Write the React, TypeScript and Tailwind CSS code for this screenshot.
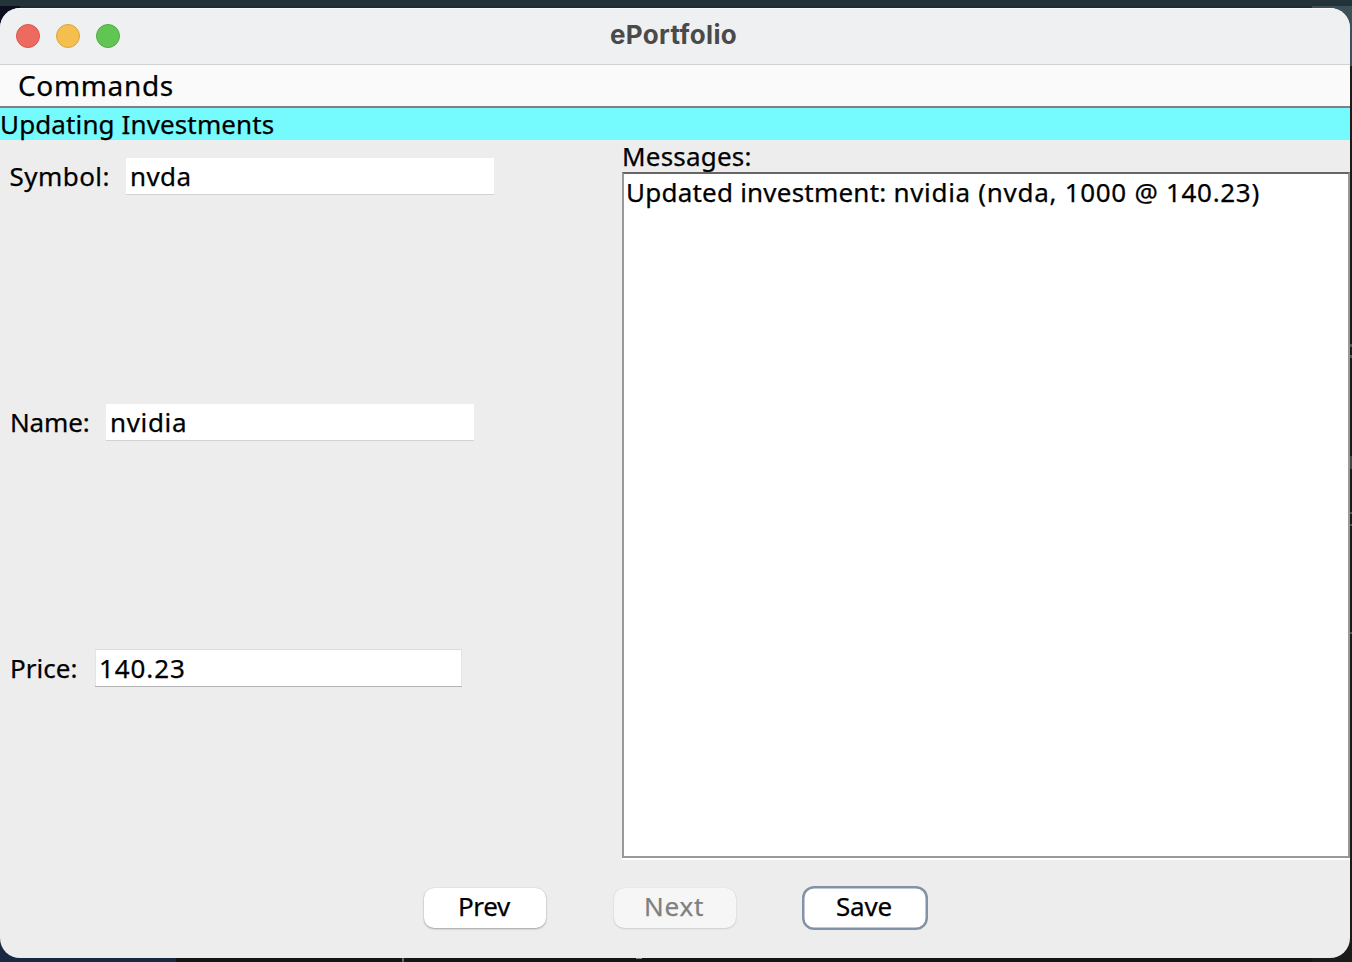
import type { ReactNode } from "react";

function Field({ label, value, labelClass, inputClass }: { label: string; value: string; labelClass: string; inputClass: string }) {
  return (
    <div className="flex h-[246px] items-start leading-[36px]">
      <label className={`shrink-0 whitespace-nowrap ${labelClass}`}>{label}</label>
      <div className={`h-[36px] shrink-0 whitespace-nowrap bg-white ${inputClass}`}>{value}</div>
    </div>
  );
}

function Button({ children, className }: { children: ReactNode; className: string }) {
  return <button className={`flex shrink-0 items-start whitespace-nowrap leading-[36px] ${className}`}>{children}</button>;
}

function Backdrop() {
  return (
    <div className="absolute inset-0 flex flex-col">
      <div className="h-[6px] bg-[#243239]" />
      <div className="flex flex-1">
        <div className="flex w-[20px] flex-col">
          <div className="flex-1 bg-[#0d0f20]" />
          <div className="h-[62px] bg-[#1a2844]" />
        </div>
        <div className="flex flex-1 flex-col justify-between bg-[#151515]">
          <div className="h-[4px] bg-[#1f2d33]" />
          <div className="flex h-[4px]">
            <div className="w-[156px] bg-[#1a2844]" />
            <div className="ml-[226px] w-[2px] bg-[#666]" />
            <div className="ml-[232px] h-[1px] w-[6px] bg-[#888]" />
          </div>
        </div>
        <div className="flex w-[40px] flex-col items-end bg-[#1b1b1b]">
          <div className="h-[60px] w-full bg-[#3b5058]" />
          <div className="mt-[278px] h-[3px] w-[2px] bg-[#555]" />
          <div className="mt-[8px] h-[3px] w-[2px] bg-[#555]" />
          <div className="mt-[98px] h-[13px] w-[2px] bg-[#444]" />
          <div className="mt-[43px] h-[2px] w-[2px] bg-[#555]" />
          <div className="mt-[10px] h-[2px] w-[2px] bg-[#555]" />
          <div className="mt-[106px] h-[2px] w-[2px] bg-[#555]" />
        </div>
      </div>
    </div>
  );
}

export default function App() {
  return (
    <div className="relative h-[962px] w-[1352px] overflow-hidden pt-[8px] font-['Noto_Sans',sans-serif] text-[26px] text-black [-webkit-text-stroke:0.25px]">
      <Backdrop />
      <main className="relative flex h-[950px] w-[1350px] flex-col overflow-hidden rounded-[20px] bg-[#ededed]">
        <header className="flex h-[57px] shrink-0 items-start border-b border-[#d0d1d2] bg-[#eff0f2] shadow-[inset_0_1px_0_#fafafa]">
          <div className="flex gap-[16px] pl-[16px] pt-[16px]">
            <span className="size-[24px] rounded-full border border-[#d8574c] bg-[#ec6a5e]" />
            <span className="size-[24px] rounded-full border border-[#dca43c] bg-[#f4bf4f]" />
            <span className="size-[24px] rounded-full border border-[#50ad3e] bg-[#61c554]" />
          </div>
          <h1 className="ml-[490px] font-['Inter',sans-serif] font-bold leading-[54px] tracking-[0.35px] text-[#4a4a4a] [-webkit-text-stroke:0]">ePortfolio</h1>
        </header>
        <nav className="h-[43px] shrink-0 border-b-2 border-[#808080] bg-[#fafafa] pl-[18px] text-[28px] leading-[40px] tracking-[0.65px]">Commands</nav>
        <h2 className="h-[32px] shrink-0 bg-[#75fbfd] leading-[32px] tracking-[0.12px]">Updating Investments</h2>
        <div className="flex h-[720px] shrink-0">
          <form className="w-[622px] shrink-0 overflow-hidden pt-[18px]">
            <Field label="Symbol:" value="nvda" labelClass="w-[126px] pl-[9.5px] tracking-[0.45px]" inputClass="w-[368px] pl-[4px] tracking-[0.4px] shadow-[0_1px_0_#d2d2d2]" />
            <Field label="Name:" value="nvidia" labelClass="w-[106px] pl-[10px] tracking-[-0.15px]" inputClass="w-[368px] pl-[4px] tracking-[0.65px] shadow-[0_1px_0_#d2d2d2]" />
            <Field label="Price:" value="140.23" labelClass="w-[95px] pl-[10px] tracking-[0.05px]" inputClass="w-[367px] pl-[3px] tracking-[0.9px] border-x border-[#e4e4e4] shadow-[0_-1px_0_#dcdcdc,0_1px_0_#b4b4b4]" />
          </form>
          <section className="flex flex-1 flex-col">
            <h3 className="h-[32px] shrink-0 leading-[32px] tracking-[0.2px]">Messages:</h3>
            <div className="flex-1 whitespace-nowrap border-2 border-[#999] border-t-[#666] bg-white pl-[2px] leading-[36px]">
              <span className="tracking-[0.22px]">Updated investment: </span>
              <span className="tracking-[0.7px]">nvidia (nvda, 1000 @ 140.23)</span>
            </div>
            <div className="h-[2px] shrink-0 bg-white" />
          </section>
        </div>
        <footer className="flex items-start pl-[424px] pt-[28px]">
          <Button className="h-[40px] w-[122px] rounded-[10px] bg-white pl-[34px] tracking-[-0.4px] shadow-[0_0_1px_rgba(0,0,0,0.2),0_1px_2px_rgba(0,0,0,0.3)]">Prev</Button>
          <Button className="ml-[68px] h-[40px] w-[122px] rounded-[10px] bg-[#f6f6f6] pl-[30px] tracking-[0.8px] text-[#808080] shadow-[0_0_1px_rgba(0,0,0,0.15),0_1px_2px_rgba(0,0,0,0.12)]">Next</Button>
          <Button className="-mt-[2px] ml-[66px] h-[44px] w-[126px] rounded-[12px] bg-white pl-[34px] pt-[2px] tracking-[-0.2px] shadow-[inset_0_0_0_2.5px_#8492a7]">Save</Button>
        </footer>
      </main>
    </div>
  );
}
